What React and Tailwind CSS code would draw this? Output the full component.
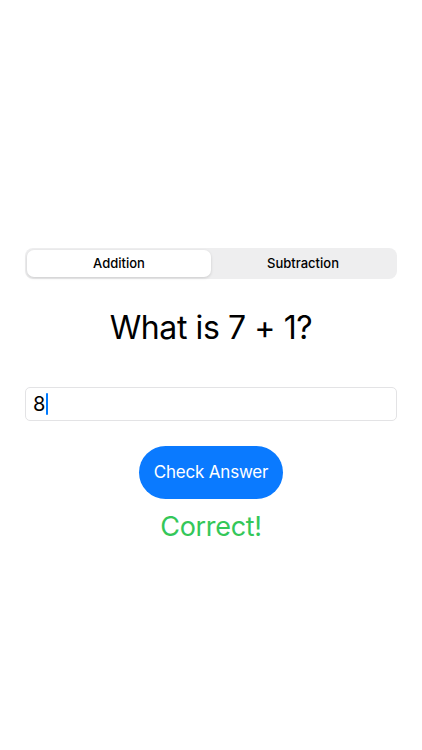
import React, { useState } from "react";

export default function App() {
  const [mode, setMode] = useState("addition");
  const answer = "8";

  return (
    <div
      className="min-h-[750px] w-full bg-white flex flex-col px-[25px] pt-[248px]"
      style={{ fontFamily: "Inter, 'Noto Sans', sans-serif" }}
    >
      {/* segmented control */}
      <div className="h-[31px] rounded-[8px] bg-[#eeeeef] p-[2px] flex">
        <button
          onClick={() => setMode("addition")}
          className={
            mode === "addition"
              ? "flex-1 rounded-[7px] bg-white text-[13px] font-medium text-black shadow-[0_1px_3px_rgba(0,0,0,0.15)]"
              : "flex-1 rounded-[7px] text-[13px] font-medium text-black"
          }
        >
          Addition
        </button>
        <button
          onClick={() => setMode("subtraction")}
          className={
            mode === "subtraction"
              ? "flex-1 rounded-[7px] bg-white text-[13px] font-medium text-black shadow-[0_1px_3px_rgba(0,0,0,0.15)]"
              : "flex-1 rounded-[7px] text-[13px] font-medium text-black"
          }
        >
          Subtraction
        </button>
      </div>

      <h1 className="mt-[26px] text-center text-[32px] leading-[46px] tracking-[-0.4px] text-black">
        {mode === "addition" ? "What is 7 + 1?" : "What is 7 - 1?"}
      </h1>

      {/* answer field */}
      <div className="mt-[36px] h-[34px] w-full rounded-[5px] border border-[#e3e3e5] px-[7px] flex items-center text-[20px] text-black">
        <span>{answer}</span>
        <span className="ml-[1px] h-[22px] w-[2px] rounded-full bg-[#007aff]"></span>
      </div>

      <div className="mt-[25px] flex justify-center">
        <button className="h-[53px] w-[144px] rounded-full bg-[#0a7aff] text-[17px] tracking-[-0.2px] text-white">
          Check Answer
        </button>
      </div>

      <p className="mt-[8px] text-center text-[27px] leading-[40px] tracking-[-0.3px] text-[#34c759]">Correct!</p>
    </div>
  );
}
